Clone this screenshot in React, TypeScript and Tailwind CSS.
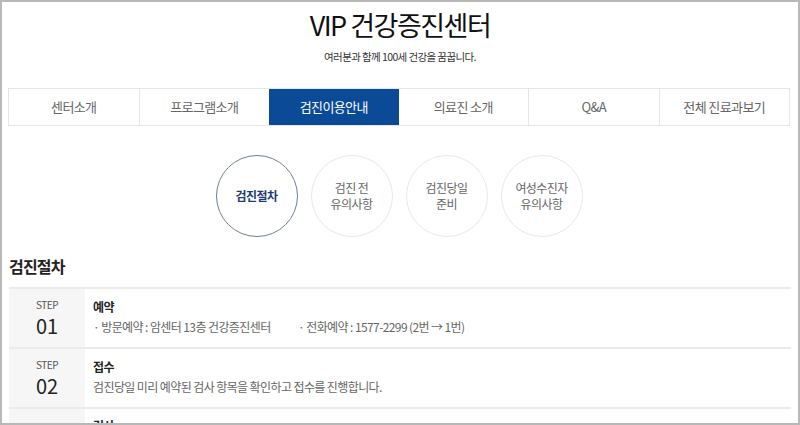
import React from "react";

const tabs = ["센터소개", "프로그램소개", "검진이용안내", "의료진 소개", "Q&A", "전체 진료과보기"];
const circles: { lines: string[]; active?: boolean }[] = [
  { lines: ["검진절차"], active: true },
  { lines: ["검진 전", "유의사항"] },
  { lines: ["검진당일", "준비"] },
  { lines: ["여성수진자", "유의사항"] },
];

export default function App() {
  return (
    <div
      className="w-[800px] h-[425px] overflow-hidden bg-white border-2 border-[#b8b8b8] box-border"
      style={{ fontFamily: '"Noto Sans CJK KR", "Noto Sans", sans-serif' }}
    >
      <div className="flex flex-col items-center pt-[5px]">
        <h1 className="text-[27px] leading-[36px] text-[#111] tracking-[-1.5px] font-normal">VIP 건강증진센터</h1>
        <p className="mt-[7px] text-[10.5px] leading-[14px] text-[#333] tracking-[-0.6px]">여러분과 함께 100세 건강을 꿈꿉니다.</p>
      </div>
      <div className="mt-[24px] ml-[6px] w-[782px] h-[38px] flex border border-[#e6e6e6]">
        {tabs.map((t, i) => (
          <div
            key={t}
            className={
              "flex-1 flex items-center justify-center text-[13px] tracking-[-0.6px] " +
              (i === 2
                ? "bg-[#0b4a96] text-white"
                : "text-[#666] " + (i < 5 && i !== 1 ? "border-r border-[#e6e6e6]" : ""))
            }
          >
            {t}
          </div>
        ))}
      </div>
      <div className="mt-[29px] flex justify-center gap-[13px] pr-[2px]">
        {circles.map((c, i) => (
          <div
            key={i}
            className={
              "w-[82px] h-[82px] rounded-full flex flex-col items-center justify-center text-[12px] leading-[16px] tracking-[-0.6px] " +
              (c.active
                ? "border border-[#6f7f91] text-[#1d3c72] font-bold"
                : "border border-[#e8e8e8] text-[#666]")
            }
          >
            {c.lines.map((l) => (
              <span key={l}>{l}</span>
            ))}
          </div>
        ))}
      </div>
      <h2 className="mt-[17px] ml-[7px] text-[16px] leading-[24px] font-bold text-[#222] tracking-[-0.8px]">검진절차</h2>
      <div className="mt-[9px] ml-[7px] w-[782px] border-t-2 border-[#ebebeb]">
        {[
          {
            n: "01",
            title: "예약",
            body: (
              <div className="flex text-[12px] text-[#666] tracking-[-0.6px]">
                <span className="w-[205px]">· 방문예약 : 암센터 13층 건강증진센터</span>
                <span>· 전화예약 : 1577-2299 (2번 → 1번)</span>
              </div>
            ),
          },
          {
            n: "02",
            title: "접수",
            body: (
              <div className="text-[12px] text-[#666] tracking-[-0.6px]">
                검진당일 미리 예약된 검사 항목을 확인하고 접수를 진행합니다.
              </div>
            ),
          },
        ].map((r) => (
          <div key={r.n} className="flex h-[60px] border-b-2 border-[#ebebeb]">
            <div className="w-[76px] bg-[#f6f6f6] flex flex-col items-center pt-[10px]">
              <span className="text-[10px] leading-[12px] text-[#555] tracking-[-0.5px]">STEP</span>
              <span className="text-[20px] leading-[26px] text-[#222] mt-[2px]">{r.n}</span>
            </div>
            <div className="flex-1 pl-[8px] pt-[10px]">
              <div className="text-[12px] leading-[16px] font-bold text-[#222] tracking-[-0.5px]">{r.title}</div>
              <div className="mt-[3px] leading-[18px]">{r.body}</div>
            </div>
          </div>
        ))}
        <div className="flex h-[90px]">
          <div className="w-[76px] bg-[#f6f6f6] flex flex-col items-center justify-center">
            <span className="text-[10px] leading-[12px] text-[#555] tracking-[-0.5px]">STEP</span>
            <span className="text-[20px] leading-[26px] text-[#222] mt-[2px]">03</span>
          </div>
          <div className="flex-1 pl-[8px] pt-[9px]">
            <div className="text-[12px] leading-[16px] font-bold text-[#222] tracking-[-0.5px]">검사</div>
          </div>
        </div>
      </div>
    </div>
  );
}
